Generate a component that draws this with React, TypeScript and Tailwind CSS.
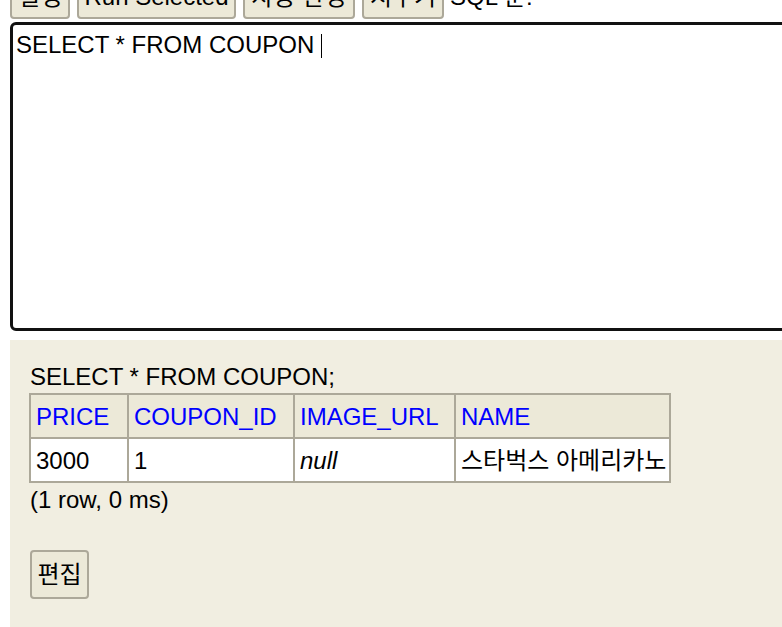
import React from 'react';

const btn = "border-2 border-[#aca899] rounded-[4px] bg-[#ece9d8] text-black leading-[28px] text-center";
const cell = "border-2 border-[#aca899] px-[5px] pt-[8px] pb-[6px]";

export default function App() {
    const rows = [{ price: '3000', id: '1', url: null, name: '스타벅스 아메리카노' }];

    return (
        <div className="h-[627px] w-[782px] overflow-hidden bg-white text-black text-[24px] leading-[28px] font-['Liberation_Sans','Noto_Sans_CJK_KR',sans-serif]">
            <div className="-mt-[29px] pl-[10px] w-[900px]">
                {/* toolbar, scrolled mostly out of view */}
                <div className="flex items-baseline gap-[7px]">
                    <button className={`${btn} w-[60px] pt-[10px] pb-[6px]`}>실행</button>
                    <button className={`${btn} w-[159px] pt-[10px] pb-[6px]`}>Run Selected</button>
                    <button className={`${btn} w-[112px] pt-[10px] pb-[6px]`}>자동 완성</button>
                    <button className={`${btn} w-[82px] pt-[10px] pb-[6px]`}>지우기</button>
                    <span className="-ml-[1px]">SQL 문:</span>
                </div>

                <div className="mt-[3px] h-[309px] w-[820px] rounded-[6px] border-[3px] border-[#111] bg-white pl-[3px] pt-[6px] whitespace-pre">
                    SELECT * FROM COUPON <span className="inline-block h-[24px] w-px bg-black align-[-5px]"></span>
                </div>

                <div className="mt-[9px] w-[820px] bg-[#f1eee1] pl-[19px] pt-[23px] pb-[60px]">
                    <div className="pl-[1px]">SELECT * FROM COUPON;</div>
                    <table className="mt-[2px] w-[640px] table-fixed border-collapse border-2 border-[#aca899]">
                        <colgroup>
                            <col className="w-[98px]" />
                            <col className="w-[166px]" />
                            <col className="w-[161px]" />
                            <col className="w-[215px]" />
                        </colgroup>
                        <thead>
                            <tr className="bg-[#ece9d8]">
                                {['PRICE', 'COUPON_ID', 'IMAGE_URL', 'NAME'].map((h) => (
                                    <th key={h} className={`${cell} text-left font-normal text-[#0000ff]`}>{h}</th>
                                ))}
                            </tr>
                        </thead>
                        <tbody>
                            {rows.map((r) => (
                                <tr key={r.id} className="bg-white">
                                    <td className={cell}>{r.price}</td>
                                    <td className={cell}>{r.id}</td>
                                    <td className={`${cell} italic`}>{r.url ?? 'null'}</td>
                                    <td className={`${cell} whitespace-nowrap`}>{r.name}</td>
                                </tr>
                            ))}
                        </tbody>
                    </table>
                    <div className="mt-[3px] pl-[1px]">(1 row, 0 ms)</div>
                    <button className={`${btn} mt-[36px] ml-[1px] h-[49px] w-[59px] py-[8px]`}>편집</button>
                </div>
            </div>
        </div>
    );
}
